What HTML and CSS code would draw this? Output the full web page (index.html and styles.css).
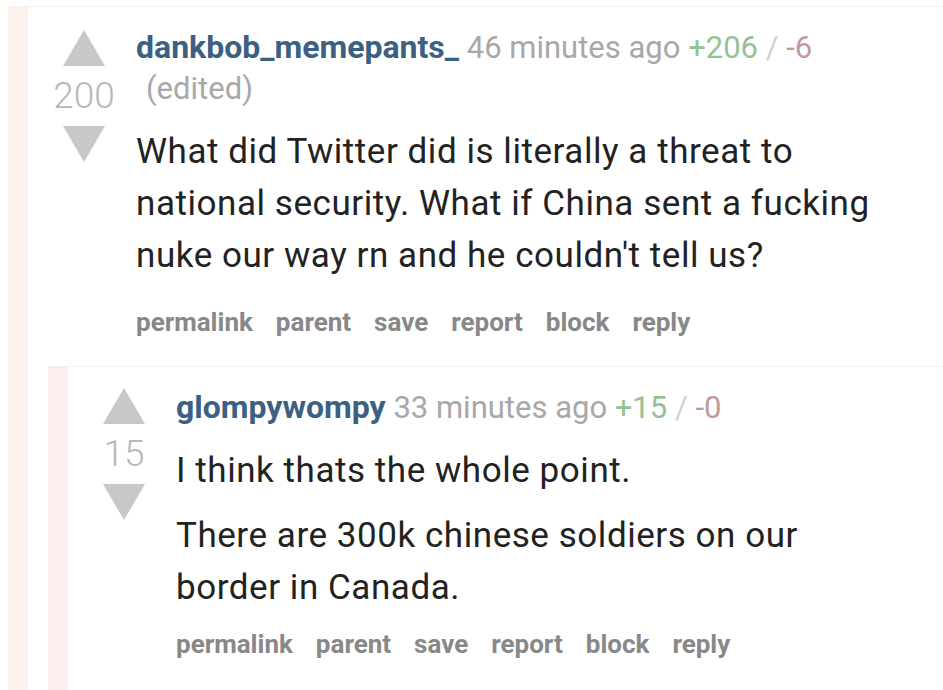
FILE: index.html
```html
<!DOCTYPE html>
<html>
<head>
<meta charset="utf-8">
<link rel="stylesheet" href="styles.css">
</head>
<body>
<div class="comment outer">
  <div class="row">
    <div class="midcol">
      <div class="arrow up"></div>
      <div class="score">200</div>
      <div class="arrow down"></div>
    </div>
    <div class="entry">
      <p class="tagline"><a class="author">dankbob_memepants_</a> <span class="time">46 minutes ago</span> <span class="ups">+206</span> <span class="sep">/</span> <span class="downs">-6</span> <span class="edited">(edited)</span></p>
      <div class="md">
        <p>What did Twitter did is literally a threat to national security. What if China sent a fucking nuke our way rn and he couldn't tell us?</p>
      </div>
      <ul class="buttons">
        <li>permalink</li><li>parent</li><li>save</li><li>report</li><li>block</li><li>reply</li>
      </ul>
    </div>
  </div>
  <div class="child">
    <div class="comment inner">
      <div class="row">
        <div class="midcol">
          <div class="arrow up"></div>
          <div class="score">15</div>
          <div class="arrow down"></div>
        </div>
        <div class="entry">
          <p class="tagline"><a class="author">glompywompy</a> <span class="time">33 minutes ago</span> <span class="ups">+15</span> <span class="sep">/</span> <span class="downs">-0</span></p>
          <div class="md">
            <p>I think thats the whole point.</p>
            <p>There are 300k chinese soldiers on our border in Canada.</p>
          </div>
          <ul class="buttons">
            <li>permalink</li><li>parent</li><li>save</li><li>report</li><li>block</li><li>reply</li>
          </ul>
        </div>
      </div>
    </div>
  </div>
</div>
</body>
</html>
```
FILE: styles.css
```css
html, body {
  margin: 0;
  padding: 0;
  background: #ffffff;
  font-family: Roboto, "Noto Sans", sans-serif;
  height: 690px;
  overflow: hidden;
}

.comment {
  border-top: 1px solid #f0f0f0;
}

.outer {
  margin: 6px 0 0 8px;
  border-left: 20px solid #fbf2ee;
  min-height: 700px;
}

.inner {
  border-left: 20px solid #fdeeee;
  min-height: 340px;
}

.child {
  margin-left: 20px;
  margin-top: 26px;
}

.row {
  display: flex;
  align-items: flex-start;
}

.midcol {
  width: 62px;
  margin-left: 25px;
  margin-right: 21px;
  display: flex;
  flex-direction: column;
  align-items: center;
  padding-top: 23px;
  flex-shrink: 0;
}

.inner .midcol {
  padding-top: 21px;
}

.arrow {
  width: 0;
  height: 0;
  border-left: 21px solid transparent;
  border-right: 21px solid transparent;
}

.arrow.up {
  border-bottom: 36px solid #c8c8c8;
}

.arrow.down {
  border-top: 36px solid #c8c8c8;
}

.score {
  font-size: 37px;
  font-weight: 300;
  color: #b8b8b8;
  line-height: 60px;
}

.entry {
  flex: 1;
  padding-right: 40px;
}

.tagline {
  margin: 20px 0 0 0;
  font-size: 31px;
  line-height: 41px;
  color: #a8a8a8;
}

.author {
  font-weight: 700;
  font-size: 32px;
  color: #3b6082;
}

.ups {
  color: #95c195;
}

.sep {
  color: #d0d0d0;
}

.downs {
  color: #c09aa2;
}

.edited {
  margin-left: 10px;
}

.md {
  margin-top: 17px;
  font-size: 35px;
  letter-spacing: 0.55px;
  line-height: 52px;
  color: #222222;
}

.md p {
  margin: 0 0 13px 0;
}

.md p:last-child {
  margin-bottom: 0;
}

.buttons {
  list-style: none;
  margin: 22px 0 0 0;
  padding: 0;
  display: flex;
  gap: 23px;
  font-size: 26px;
  font-weight: 700;
  color: #888888;
  line-height: 36px;
}

.inner .buttons {
  margin-top: 12px;
}
```
